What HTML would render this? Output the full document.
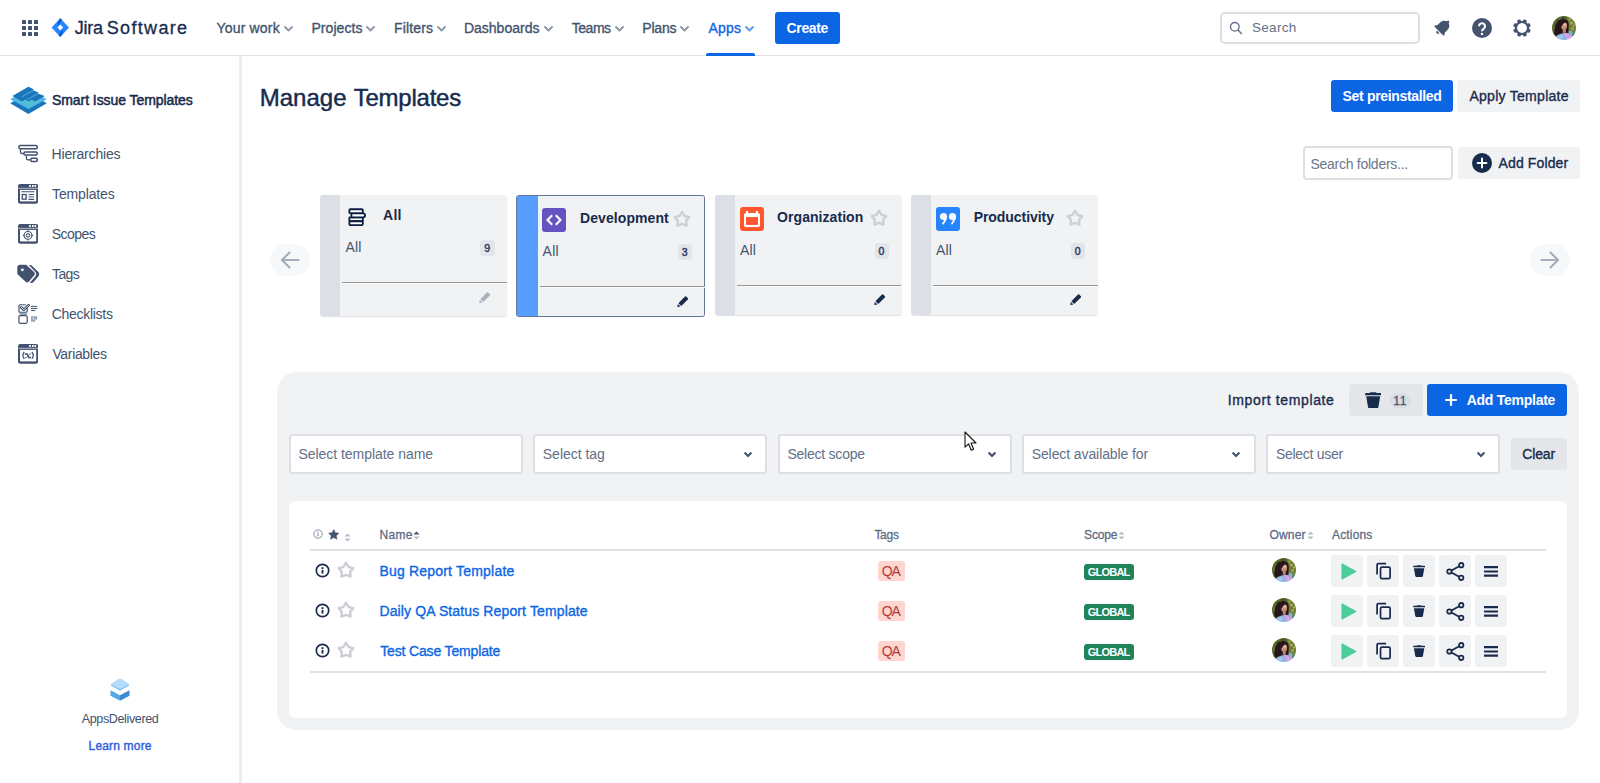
<!DOCTYPE html>
<html><head><meta charset="utf-8"><title>Manage Templates - Jira</title><style>html,body{margin:0;padding:0;background:#fff;}
body{width:1600px;height:783px;overflow:hidden;position:relative;font-family:"Liberation Sans",sans-serif;}
.b{position:absolute;display:block;}
.t{position:absolute;white-space:pre;display:block;}
</style></head><body>
<!-- header -->
<div class="b" style="left:0px;top:55px;width:1600px;height:1px;background:#E1E3E8;"></div>
<svg class="b" style="left:22px;top:20px;" width="16" height="16" viewBox="0 0 16 16"><rect x="0" y="0" width="4" height="4" rx="0.6" fill="#44546F"/><rect x="6" y="0" width="4" height="4" rx="0.6" fill="#44546F"/><rect x="12" y="0" width="4" height="4" rx="0.6" fill="#44546F"/><rect x="0" y="6" width="4" height="4" rx="0.6" fill="#44546F"/><rect x="6" y="6" width="4" height="4" rx="0.6" fill="#44546F"/><rect x="12" y="6" width="4" height="4" rx="0.6" fill="#44546F"/><rect x="0" y="12" width="4" height="4" rx="0.6" fill="#44546F"/><rect x="6" y="12" width="4" height="4" rx="0.6" fill="#44546F"/><rect x="12" y="12" width="4" height="4" rx="0.6" fill="#44546F"/></svg>
<svg class="b" style="left:51.0px;top:18.1px;" width="18.6" height="19.2" viewBox="0 0 18 19"><path d="M9 0.3 L17.6 9.5 L9 18.7 L0.4 9.5 Z" fill="#2684FF"/><path d="M9 0.3 L10.6 2 L7.2 7 L6.2 6.3 C6.6 4.6 7.2 2.4 9 0.3 Z" fill="#0A56D6"/><path d="M9 18.7 L7.4 17 L10.8 12 L11.8 12.7 C11.4 14.4 10.8 16.6 9 18.7 Z" fill="#0A56D6"/><path d="M9 6.5 L11.8 9.5 L9 12.5 L6.2 9.5 Z" fill="#fff"/></svg>
<span class="t" style="left:74.70px;top:18.76px;font-size:18px;line-height:18px;color:#172B4D;letter-spacing:-0.233px;-webkit-text-stroke:0.3px #172B4D;">Jira</span>
<span class="t" style="left:106.80px;top:18.76px;font-size:18px;line-height:18px;color:#172B4D;letter-spacing:1.314px;-webkit-text-stroke:0.3px #172B4D;">Software</span>
<span class="t" style="left:216.60px;top:21.15px;font-size:14px;line-height:14px;color:#44546F;letter-spacing:0.162px;-webkit-text-stroke:0.35px #44546F;">Your work</span>
<svg class="b" style="left:283.5px;top:26px;" width="9" height="6" viewBox="0 0 9 6"><path d="M1 1 L4.5 4.5 L8 1" fill="none" stroke="#8C96A8" stroke-width="1.8" stroke-linecap="round" stroke-linejoin="round"/></svg>
<span class="t" style="left:311.40px;top:21.15px;font-size:14px;line-height:14px;color:#44546F;letter-spacing:0.071px;-webkit-text-stroke:0.35px #44546F;">Projects</span>
<svg class="b" style="left:365.5px;top:26px;" width="9" height="6" viewBox="0 0 9 6"><path d="M1 1 L4.5 4.5 L8 1" fill="none" stroke="#8C96A8" stroke-width="1.8" stroke-linecap="round" stroke-linejoin="round"/></svg>
<span class="t" style="left:393.90px;top:21.15px;font-size:14px;line-height:14px;color:#44546F;letter-spacing:0.183px;-webkit-text-stroke:0.35px #44546F;">Filters</span>
<svg class="b" style="left:436.5px;top:26px;" width="9" height="6" viewBox="0 0 9 6"><path d="M1 1 L4.5 4.5 L8 1" fill="none" stroke="#8C96A8" stroke-width="1.8" stroke-linecap="round" stroke-linejoin="round"/></svg>
<span class="t" style="left:463.90px;top:21.15px;font-size:14px;line-height:14px;color:#44546F;letter-spacing:0.011px;-webkit-text-stroke:0.35px #44546F;">Dashboards</span>
<svg class="b" style="left:543.5px;top:26px;" width="9" height="6" viewBox="0 0 9 6"><path d="M1 1 L4.5 4.5 L8 1" fill="none" stroke="#8C96A8" stroke-width="1.8" stroke-linecap="round" stroke-linejoin="round"/></svg>
<span class="t" style="left:571.70px;top:21.15px;font-size:14px;line-height:14px;color:#44546F;letter-spacing:-0.450px;-webkit-text-stroke:0.35px #44546F;">Teams</span>
<svg class="b" style="left:614.5px;top:26px;" width="9" height="6" viewBox="0 0 9 6"><path d="M1 1 L4.5 4.5 L8 1" fill="none" stroke="#8C96A8" stroke-width="1.8" stroke-linecap="round" stroke-linejoin="round"/></svg>
<span class="t" style="left:642.30px;top:21.15px;font-size:14px;line-height:14px;color:#44546F;letter-spacing:-0.200px;-webkit-text-stroke:0.35px #44546F;">Plans</span>
<svg class="b" style="left:679.5px;top:26px;" width="9" height="6" viewBox="0 0 9 6"><path d="M1 1 L4.5 4.5 L8 1" fill="none" stroke="#8C96A8" stroke-width="1.8" stroke-linecap="round" stroke-linejoin="round"/></svg>
<span class="t" style="left:708.50px;top:21.15px;font-size:14px;line-height:14px;color:#0C66E4;letter-spacing:0.200px;-webkit-text-stroke:0.35px #0C66E4;">Apps</span>
<svg class="b" style="left:744.5px;top:26px;" width="9" height="6" viewBox="0 0 9 6"><path d="M1 1 L4.5 4.5 L8 1" fill="none" stroke="#5B9BF0" stroke-width="1.8" stroke-linecap="round" stroke-linejoin="round"/></svg>
<div class="b" style="left:706px;top:53px;width:49px;height:3px;background:#0C66E4;border-radius:2px 2px 0 0;"></div>
<div class="b" style="left:775px;top:12px;width:65px;height:32px;background:#0C66E4;border-radius:3px;"></div>
<span class="t" style="left:786.50px;top:21.15px;font-size:14px;line-height:14px;color:#fff;letter-spacing:-0.340px;font-weight:700;">Create</span>
<div class="b" style="left:1220px;top:12px;width:200px;height:32px;background:#fff;border-radius:5px;box-sizing:border-box;border:2px solid #DCDFE4;"></div>
<svg class="b" style="left:1229px;top:21px;" width="14" height="14" viewBox="0 0 14 14"><circle cx="5.8" cy="5.8" r="4.3" fill="none" stroke="#626F86" stroke-width="1.35"/><path d="M9 9 L12.4 12.4" stroke="#626F86" stroke-width="1.45" stroke-linecap="round"/></svg>
<span class="t" style="left:1251.90px;top:21.47px;font-size:13.5px;line-height:13.5px;color:#626F86;letter-spacing:0.340px;">Search</span>
<svg class="b" style="left:1433.4px;top:16.6px;" width="20" height="20" viewBox="0 0 20 20"><g transform="rotate(45 10 10) translate(10 0) scale(0.94 1) translate(-10 0)" fill="#44546F"><path d="M10 1.6 a1.4 1.4 0 0 1 1.4 1.4 v0.3 c2.6 0.7 4.1 2.9 4.1 5.6 v3.6 l1.6 2.2 c0.3 0.5 0 1.1 -0.6 1.1 H3.5 c-0.6 0 -0.9 -0.6 -0.6 -1.1 l1.6 -2.2 V8.9 c0 -2.7 1.5 -4.9 4.1 -5.6 V3 A1.4 1.4 0 0 1 10 1.6 Z"/><path d="M8 16.8 h4 a2 2 0 0 1 -4 0 Z"/></g></svg>
<svg class="b" style="left:1472px;top:18px;" width="20" height="20" viewBox="0 0 20 20"><circle cx="10" cy="10" r="10" fill="#44546F"/><path d="M7 8.3 a3 3 0 1 1 4.5 2.6 c-1 0.6 -1.5 1.1 -1.5 2.4" fill="none" stroke="#fff" stroke-width="2.1" stroke-linecap="butt"/><rect x="8.9" y="14.9" width="2.2" height="2.1" fill="#fff"/></svg>
<svg class="b" style="left:1512px;top:18px;transform:rotate(22.5deg);" width="20" height="20" viewBox="-10 -10 20 20"><rect x="-1.9" y="-8.9" width="3.8" height="3.4" rx="1.2" transform="rotate(0)" fill="#44546F"/><rect x="-1.9" y="-8.9" width="3.8" height="3.4" rx="1.2" transform="rotate(45)" fill="#44546F"/><rect x="-1.9" y="-8.9" width="3.8" height="3.4" rx="1.2" transform="rotate(90)" fill="#44546F"/><rect x="-1.9" y="-8.9" width="3.8" height="3.4" rx="1.2" transform="rotate(135)" fill="#44546F"/><rect x="-1.9" y="-8.9" width="3.8" height="3.4" rx="1.2" transform="rotate(180)" fill="#44546F"/><rect x="-1.9" y="-8.9" width="3.8" height="3.4" rx="1.2" transform="rotate(225)" fill="#44546F"/><rect x="-1.9" y="-8.9" width="3.8" height="3.4" rx="1.2" transform="rotate(270)" fill="#44546F"/><rect x="-1.9" y="-8.9" width="3.8" height="3.4" rx="1.2" transform="rotate(315)" fill="#44546F"/><circle cx="0" cy="0" r="6" fill="none" stroke="#44546F" stroke-width="2.2"/></svg>
<svg class="b" style="left:1552px;top:16px;" width="24" height="24" viewBox="0 0 24 24"><defs><clipPath id="av0"><circle cx="12" cy="12" r="12"/></clipPath><filter id="av0f" x="-10%" y="-10%" width="120%" height="120%"><feGaussianBlur stdDeviation="0.55"/></filter></defs><g clip-path="url(#av0)"><g filter="url(#av0f)"><rect x="-2" y="-2" width="28" height="28" fill="#54682A"/><path d="M15 1 L26 1 L26 19 L17 17 Z" fill="#6D7F37"/><circle cx="19.5" cy="7" r="1.6" fill="#A8A858"/><circle cx="20.5" cy="12.5" r="1.5" fill="#9EA24E"/><circle cx="17.6" cy="3.6" r="1.3" fill="#93A048"/><circle cx="22" cy="9.5" r="1.1" fill="#B5B060"/><circle cx="3" cy="12" r="1.4" fill="#8A9A44"/><circle cx="5.5" cy="4.5" r="1.2" fill="#3E4F1E"/><circle cx="11" cy="1.8" r="1.4" fill="#3A4A1C"/><path d="M2.6 19 C1.2 10 5 3.3 11 3 C16 2.8 17.3 7 16.6 11 C16.4 13.5 16.8 15 16 16.5 L9 20.5 Z" fill="#26141A"/><ellipse cx="12.1" cy="10" rx="2.9" ry="3.9" fill="#CF9A84"/><ellipse cx="12.6" cy="8.2" rx="1.8" ry="1.5" fill="#E0B49A"/><path d="M9 9.5 C9 6 11.5 4.6 14.6 6.2 C12.6 6.4 10.6 7.4 9.8 11 Z" fill="#26141A"/><ellipse cx="12.5" cy="12" rx="1.3" ry="0.7" fill="#B56A6A"/><path d="M11 13.5 L13.6 13.5 L14 16.5 L10.6 16.8 Z" fill="#B98572"/><path d="M2 26 C3 19.5 7 17.6 11 17.2 C14 17 17 17 20 18 L22 26 Z" fill="#8CB3E2"/><path d="M16.8 14.5 L20.5 15.5 L20.5 19.5 L17 18.5 Z" fill="#86AEDC"/><path d="M12 16.8 C15 17 18 18 19.5 21.5 L16 24.5 L12.5 19 Z" fill="#D7A2E2"/><path d="M6 20 L10 19 L11 22 L7 23 Z" fill="#A9C4EA"/></g></g></svg>
<!-- sidebar -->
<div class="b" style="left:239px;top:56px;width:2.6px;height:727px;background:#EBECF0;"></div>
<svg class="b" style="left:10px;top:86px;" width="37" height="28.2" viewBox="0 0 37 28.2"><path d="M18.4 6.6 L36.8 17.2 L18.4 28 L0.25 17.2 Z" fill="#1B75BB"/><path d="M18.4 3 L36.8 13.3 L18.4 22.9 L0.25 13.3 Z" fill="#4FB6E8"/><path d="M18.4 9 L31 14.5 L18.4 21.6 L6 14.5 Z" fill="#55D6A6" opacity="0.28"/><path d="M18.4 0.7 L23.7 3.3 L22.9 4.3 L28.6 6.4 L27.7 7.4 L34.8 10.05 L25 15.6 L21.5 13.8 L18.5 15.4 L15.2 13.6 L12 15.4 L2.3 10.05 Z" fill="#1B75BB"/><path d="M22.9 4.5 L11.5 11.2 M27.7 7.6 L17 13.6" stroke="#3D98D6" stroke-width="1.5"/></svg>
<span class="t" style="left:52.00px;top:93.15px;font-size:14px;line-height:14px;color:#172B4D;letter-spacing:-0.070px;-webkit-text-stroke:0.5px #172B4D;">Smart Issue Templates</span>
<svg class="b" style="left:18px;top:143.8px;" width="21" height="19" viewBox="0 0 21 19"><g fill="#fff" stroke="#42526E" stroke-width="1.5"><rect x="0.95" y="1.4" width="18.3" height="3.3" rx="1.3"/><rect x="5.85" y="7.95" width="13.4" height="3.1" rx="1.3"/><rect x="12.75" y="14.25" width="6.5" height="3.3" rx="1.2"/></g><path d="M2.5 5.3 V7.9 Q2.5 9.5 4.1 9.5 H5.3 M8.4 11.7 V14.2 Q8.4 15.8 10 15.8 H12.2" fill="none" stroke="#42526E" stroke-width="1.3"/></svg>
<span class="t" style="left:51.60px;top:147.15px;font-size:14px;line-height:14px;color:#42526E;letter-spacing:-0.190px;">Hierarchies</span>
<svg class="b" style="left:18.0px;top:184.1px;" width="20.2" height="19.7" viewBox="0 0 20.2 19.7"><rect x="0" y="0" width="20.2" height="19.7" rx="2.2" fill="#42526E"/><rect x="0.2" y="3.8" width="19.8" height="1.1" fill="#A7B0C1"/><rect x="2" y="5.9" width="16.2" height="11.5" fill="#fff"/><rect x="11" y="1" width="1.8" height="1.9" fill="#fff"/><rect x="14" y="1" width="1.7" height="1.9" fill="#fff"/><rect x="16.5" y="1" width="1.6" height="1.9" fill="#fff"/><rect x="3.2" y="7.2" width="13.5" height="1.1" rx="0.5" fill="#42526E"/><rect x="4.25" y="10.55" width="3.9" height="4.6" fill="#fff" stroke="#42526E" stroke-width="1.3"/><rect x="10.4" y="9.9" width="5.8" height="1.1" rx="0.5" fill="#42526E"/><rect x="10.4" y="12.3" width="5.8" height="1.2" rx="0.5" fill="#6B7A94"/><rect x="10.4" y="14.8" width="5.8" height="1.1" rx="0.5" fill="#42526E"/></svg>
<span class="t" style="left:52.10px;top:187.15px;font-size:14px;line-height:14px;color:#42526E;letter-spacing:-0.150px;">Templates</span>
<svg class="b" style="left:18.0px;top:224.1px;" width="20.2" height="19.7" viewBox="0 0 20.2 19.7"><rect x="0" y="0" width="20.2" height="19.7" rx="2.2" fill="#42526E"/><rect x="0.2" y="3.8" width="19.8" height="1.1" fill="#A7B0C1"/><rect x="2" y="5.9" width="16.2" height="11.5" fill="#fff"/><rect x="11" y="1" width="1.8" height="1.9" fill="#fff"/><rect x="14" y="1" width="1.7" height="1.9" fill="#fff"/><rect x="16.5" y="1" width="1.6" height="1.9" fill="#fff"/><circle cx="10" cy="11.4" r="3.9" fill="none" stroke="#42526E" stroke-width="1.1"/><circle cx="10" cy="11.4" r="1.8" fill="#D5DAE3" stroke="#42526E" stroke-width="1"/><path d="M10 6.3 v1.3 M10 15.2 v1.3 M4.9 11.4 h1.3 M13.8 11.4 h1.3" stroke="#42526E" stroke-width="1.1"/></svg>
<span class="t" style="left:51.80px;top:227.15px;font-size:14px;line-height:14px;color:#42526E;letter-spacing:-0.540px;">Scopes</span>
<svg class="b" style="left:16.5px;top:264px;" width="24" height="20" viewBox="0 0 24 20"><path d="M11.8 1.1 L13.2 1.1 Q14.4 1.3 15.2 2 L21.6 8.2 Q23.2 10.2 21.6 12.2 L16.4 18.2 Q15 19.5 12.9 18.7 L18.6 11.9 Q20.1 10 18.6 8.3 Z" fill="#42526E"/><path d="M0.3 3.6 Q0.3 0.8 3.3 0.8 H8.6 Q9.4 0.8 10 1.4 L17.3 8.2 Q18.7 9.7 17.3 11.3 L12 17.6 Q10.2 19.3 8.4 17.6 L1.1 10.8 Q0.3 10 0.3 9 Z" fill="#42526E"/><circle cx="5.35" cy="5.85" r="1.45" fill="#fff"/></svg>
<span class="t" style="left:52.10px;top:266.85px;font-size:14px;line-height:14px;color:#42526E;letter-spacing:-0.667px;">Tags</span>
<svg class="b" style="left:18px;top:304px;" width="21" height="21" viewBox="0 0 21 21"><rect x="0.8" y="0.75" width="8.4" height="7.6" rx="1.4" fill="#fff" stroke="#42526E" stroke-width="1.2"/><rect x="0.2" y="1.6" width="1.5" height="6" fill="#8A96AD"/><rect x="1.6" y="8.5" width="7.4" height="2.5" fill="#9AA5B8"/><rect x="0.8" y="11.55" width="8.4" height="7.8" rx="1.5" fill="#fff" stroke="#42526E" stroke-width="1.2"/><rect x="0.2" y="12.6" width="1.5" height="5.8" fill="#8A96AD"/><path d="M7 0.2 H10 V3 Z" fill="#fff"/><path d="M3.3 3.4 L5.8 5.7 L10.6 1.3" fill="none" stroke="#42526E" stroke-width="2.7" stroke-linecap="round" stroke-linejoin="round"/><path d="M3.3 3.4 L5.8 5.7 L10.6 1.3" fill="none" stroke="#fff" stroke-width="0.8" stroke-linecap="round" stroke-linejoin="round"/><path d="M13 2.4 h6.2 M13 4.45 h6.4 M13 6.5 h4.3" stroke="#42526E" stroke-width="1"/><path d="M13 12.2 H19.2 V15.4 H17.2 V17.7 H13 Z" fill="#9AA5B8"/><rect x="14.9" y="13.6" width="1.1" height="2" fill="#E6E9EF"/></svg>
<span class="t" style="left:51.70px;top:307.15px;font-size:14px;line-height:14px;color:#42526E;letter-spacing:-0.289px;">Checklists</span>
<svg class="b" style="left:18.0px;top:344.1px;" width="20.2" height="19.7" viewBox="0 0 20.2 19.7"><rect x="0" y="0" width="20.2" height="19.7" rx="2.2" fill="#42526E"/><rect x="0.2" y="3.8" width="19.8" height="1.1" fill="#A7B0C1"/><rect x="2" y="5.9" width="16.2" height="11.5" fill="#fff"/><rect x="11" y="1" width="1.8" height="1.9" fill="#fff"/><rect x="14" y="1" width="1.7" height="1.9" fill="#fff"/><rect x="16.5" y="1" width="1.6" height="1.9" fill="#fff"/><path d="M6.3 8 Q3.5 11.4 6.3 14.8 M13.9 8 Q16.7 11.4 13.9 14.8" fill="none" stroke="#42526E" stroke-width="1.25"/><path d="M7.5 10.2 C8.6 9.3 9.4 9.8 10 11.7 C10.6 13.7 11.3 14.3 12.5 13.3" fill="none" stroke="#42526E" stroke-width="1.5" stroke-linecap="round"/><path d="M12.8 9.8 C11.8 9.6 11 10.6 10 11.8 C9 13 8.2 14.2 7.2 13.8" fill="none" stroke="#42526E" stroke-width="0.9" stroke-linecap="round"/></svg>
<span class="t" style="left:52.40px;top:347.15px;font-size:14px;line-height:14px;color:#42526E;letter-spacing:-0.337px;">Variables</span>
<svg class="b" style="left:110px;top:678px;" width="20" height="23.5" viewBox="0 0 20 23.5"><path d="M10 1 L19.6 7 L10 12.4 L0.4 7 Z" fill="#5FAEE8"/><path d="M10 0.2 L19.6 6.2 L10 11.6 L0.4 6.2 Z" fill="#B2DCF9"/><path d="M0.5 12.2 L10 17.3 L10 22.8 L0.5 17.7 Z" fill="#55A8E6"/><path d="M19.5 12.2 L10 17.3 L10 22.8 L19.5 17.7 Z" fill="#3C89D8"/></svg>
<span class="t" style="left:81.70px;top:713.02px;font-size:12.5px;line-height:12.5px;color:#42526E;letter-spacing:-0.350px;">AppsDelivered</span>
<span class="t" style="left:88.60px;top:739.84px;font-size:12px;line-height:12px;color:#2F5FE0;letter-spacing:0.167px;-webkit-text-stroke:0.4px #2F5FE0;">Learn more</span>
<!-- main -->
<span class="t" style="left:259.70px;top:85.68px;font-size:24px;line-height:24px;color:#172B4D;letter-spacing:0.020px;-webkit-text-stroke:0.45px #172B4D;">Manage</span>
<span class="t" style="left:353.70px;top:85.68px;font-size:24px;line-height:24px;color:#172B4D;letter-spacing:-0.238px;-webkit-text-stroke:0.45px #172B4D;">Templates</span>
<div class="b" style="left:1331px;top:80px;width:122px;height:32px;background:#0C66E4;border-radius:3px;"></div>
<span class="t" style="left:1342.60px;top:89.15px;font-size:14px;line-height:14px;color:#fff;letter-spacing:-0.333px;font-weight:700;">Set preinstalled</span>
<div class="b" style="left:1457px;top:80px;width:123px;height:32px;background:#F1F2F4;border-radius:3px;"></div>
<span class="t" style="left:1469.40px;top:89.15px;font-size:14px;line-height:14px;color:#172B4D;letter-spacing:0.285px;-webkit-text-stroke:0.35px #172B4D;">Apply Template</span>
<div class="b" style="left:1303px;top:146px;width:150px;height:34px;background:#fff;border-radius:4px;box-sizing:border-box;border:2px solid #DCDFE4;"></div>
<span class="t" style="left:1310.40px;top:157.15px;font-size:14px;line-height:14px;color:#6B778C;letter-spacing:-0.256px;">Search folders...</span>
<div class="b" style="left:1458px;top:147px;width:122px;height:32px;background:#F1F2F4;border-radius:3px;"></div>
<svg class="b" style="left:1472px;top:153px;" width="20" height="20" viewBox="0 0 20 20"><circle cx="10" cy="10" r="10" fill="#172B4D"/><path d="M10 5.6 V14.4 M5.6 10 H14.4" stroke="#fff" stroke-width="2" stroke-linecap="round"/></svg>
<span class="t" style="left:1498.50px;top:156.15px;font-size:14px;line-height:14px;color:#172B4D;letter-spacing:0.133px;-webkit-text-stroke:0.35px #172B4D;">Add Folder</span>
<div class="b" style="left:270px;top:244px;width:40px;height:32px;background:#F7F8F9;border-radius:16px;"></div>
<svg class="b" style="left:280px;top:250px;" width="20" height="20" viewBox="0 0 20 20"><path d="M18.5 10 H2.5 M9.5 2.5 L2 10 L9.5 17.5" fill="none" stroke="#A5ADBA" stroke-width="2.1" stroke-linecap="round" stroke-linejoin="round"/></svg>
<div class="b" style="left:1530px;top:244px;width:40px;height:32px;background:#F7F8F9;border-radius:16px;"></div>
<svg class="b" style="left:1540px;top:250px;" width="20" height="20" viewBox="0 0 20 20"><path d="M1.5 10 H17.5 M10.5 2.5 L18 10 L10.5 17.5" fill="none" stroke="#A5ADBA" stroke-width="2.1" stroke-linecap="round" stroke-linejoin="round"/></svg>
<div class="b" style="left:320px;top:195px;width:187px;height:121px;background:#F1F2F4;border-radius:3px;overflow:hidden;box-shadow:0 1px 1px rgba(9,30,66,0.13);"><div class="b" style="left:0;top:0;width:20px;height:121px;background:#DCDFE4"></div></div>
<svg class="b" style="left:347.7px;top:207.7px;" width="18.1" height="18.1" viewBox="0 0 19 19"><g fill="#fff" stroke="#091E42" stroke-width="1.9"><rect x="1.4" y="1.3" width="14.2" height="4.3" rx="1.2"/><rect x="1.4" y="9.8" width="14.2" height="4.1" rx="0.6"/><rect x="1.4" y="13.9" width="14.2" height="4.1" rx="1.4"/><path d="M3.6 5.6 H15.8 A2.1 2.1 0 0 1 15.8 9.8 H3.6 Z"/></g></svg>
<span class="t" style="left:383.10px;top:208.35px;font-size:14px;line-height:14px;color:#172B4D;letter-spacing:0.200px;font-weight:700;">All</span>
<span class="t" style="left:345.50px;top:240.15px;font-size:14px;line-height:14px;color:#44546F;letter-spacing:0.200px;">All</span>
<div class="b" style="left:480px;top:240px;width:15px;height:15.7px;background:#E2E5EA;border-radius:3.5px;"></div><span class="t" style="left:484.20px;top:243.41px;font-size:10.5px;line-height:10.5px;color:#2C3E5D;letter-spacing:0.000px;-webkit-text-stroke:0.45px #2C3E5D;">9</span>
<div class="b" style="left:342px;top:282px;width:165px;height:1px;background:#969696;"></div><div class="b" style="left:342px;top:283px;width:165px;height:1px;background:#F8F9FA;"></div>
<svg class="b" style="left:479.0px;top:291.6px;" width="11.6" height="11.2" viewBox="0 0 12.5 12"><path d="M8.6 0.6 a1 1 0 0 1 1.4 0 l1.7 1.7 a1 1 0 0 1 0 1.4 L4.6 10.8 L1.5 7.7 Z" fill="#A9AFBC"/><path d="M0.9 8.6 L3.7 11.4 L0.3 11.9 Z" fill="#A9AFBC"/></svg>
<div class="b" style="left:516px;top:195px;width:189px;height:122px;background:#F1F2F4;border-radius:2.5px;box-sizing:border-box;border:1px solid #63779A;overflow:hidden;"><div class="b" style="left:0;top:0;width:21px;height:122px;background:#579DFF"></div></div>
<div class="b" style="left:542px;top:208px;width:24px;height:24px;background:#6554C0;border-radius:3px;"></div>
<svg class="b" style="left:546px;top:212px;" width="16" height="16" viewBox="0 0 16 16"><path d="M6.2 3.2 L1.5 8 L6.2 12.8 M9.8 3.2 L14.5 8 L9.8 12.8" fill="none" stroke="#F4F5F7" stroke-width="2.2" stroke-linecap="butt" stroke-linejoin="miter"/></svg>
<span class="t" style="left:580.00px;top:211.35px;font-size:14px;line-height:14px;color:#172B4D;letter-spacing:0.080px;font-weight:700;">Development</span>
<svg class="b" style="left:673.3000000000001px;top:209.70000000000002px;" width="18" height="18" viewBox="0 0 18 18"><path d="M9.00 1.90 L11.59 5.94 L16.23 7.15 L13.18 10.86 L13.47 15.65 L9.00 13.90 L4.53 15.65 L4.82 10.86 L1.77 7.15 L6.41 5.94 Z" fill="none" stroke="#CDD0D6" stroke-width="2.5" stroke-linejoin="round"/></svg>
<span class="t" style="left:542.60px;top:244.15px;font-size:14px;line-height:14px;color:#44546F;letter-spacing:0.200px;">All</span>
<div class="b" style="left:678px;top:244px;width:14px;height:15.7px;background:#E2E5EA;border-radius:3.5px;"></div><span class="t" style="left:681.70px;top:247.41px;font-size:10.5px;line-height:10.5px;color:#2C3E5D;letter-spacing:0.000px;-webkit-text-stroke:0.45px #2C3E5D;">3</span>
<div class="b" style="left:540px;top:286px;width:165px;height:1px;background:#969696;"></div><div class="b" style="left:540px;top:287px;width:165px;height:1px;background:#F8F9FA;"></div>
<svg class="b" style="left:676.5px;top:295.6px;" width="11.6" height="11.2" viewBox="0 0 12.5 12"><path d="M8.6 0.6 a1 1 0 0 1 1.4 0 l1.7 1.7 a1 1 0 0 1 0 1.4 L4.6 10.8 L1.5 7.7 Z" fill="#172B4D"/><path d="M0.9 8.6 L3.7 11.4 L0.3 11.9 Z" fill="#172B4D"/></svg>
<div class="b" style="left:715px;top:195px;width:186.5px;height:120px;background:#F1F2F4;border-radius:3px;overflow:hidden;box-shadow:0 1px 1px rgba(9,30,66,0.13);"><div class="b" style="left:0;top:0;width:20px;height:120px;background:#DCDFE4"></div></div>
<div class="b" style="left:740px;top:207px;width:24px;height:24px;background:#FF5630;border-radius:3px;"></div>
<svg class="b" style="left:744px;top:211px;" width="16" height="16" viewBox="0 0 16 16"><rect x="0" y="2" width="16" height="14" rx="2" fill="#fff"/><rect x="2" y="6" width="12" height="7.9" fill="#FF5630"/><rect x="2" y="0" width="2.1" height="3" fill="#fff"/><rect x="11.9" y="0" width="2.1" height="3" fill="#fff"/></svg>
<span class="t" style="left:777.10px;top:210.15px;font-size:14px;line-height:14px;color:#172B4D;letter-spacing:0.055px;font-weight:700;">Organization</span>
<svg class="b" style="left:870.3000000000001px;top:208.5px;" width="18" height="18" viewBox="0 0 18 18"><path d="M9.00 1.90 L11.59 5.94 L16.23 7.15 L13.18 10.86 L13.47 15.65 L9.00 13.90 L4.53 15.65 L4.82 10.86 L1.77 7.15 L6.41 5.94 Z" fill="none" stroke="#CDD0D6" stroke-width="2.5" stroke-linejoin="round"/></svg>
<span class="t" style="left:740.00px;top:243.15px;font-size:14px;line-height:14px;color:#44546F;letter-spacing:0.200px;">All</span>
<div class="b" style="left:874.8px;top:243px;width:14.2px;height:15.7px;background:#E2E5EA;border-radius:3.5px;"></div><span class="t" style="left:878.60px;top:246.41px;font-size:10.5px;line-height:10.5px;color:#2C3E5D;letter-spacing:0.000px;-webkit-text-stroke:0.45px #2C3E5D;">0</span>
<div class="b" style="left:737px;top:285px;width:164px;height:1px;background:#969696;"></div><div class="b" style="left:737px;top:286px;width:164px;height:1px;background:#F8F9FA;"></div>
<svg class="b" style="left:873.5px;top:294.3px;" width="11.6" height="11.2" viewBox="0 0 12.5 12"><path d="M8.6 0.6 a1 1 0 0 1 1.4 0 l1.7 1.7 a1 1 0 0 1 0 1.4 L4.6 10.8 L1.5 7.7 Z" fill="#172B4D"/><path d="M0.9 8.6 L3.7 11.4 L0.3 11.9 Z" fill="#172B4D"/></svg>
<div class="b" style="left:911px;top:195px;width:186.5px;height:120px;background:#F1F2F4;border-radius:3px;overflow:hidden;box-shadow:0 1px 1px rgba(9,30,66,0.13);"><div class="b" style="left:0;top:0;width:20px;height:120px;background:#DCDFE4"></div></div>
<div class="b" style="left:936px;top:207px;width:24px;height:24px;background:#2684FF;border-radius:3px;"></div>
<svg class="b" style="left:940px;top:211px;" width="16" height="16" viewBox="0 0 16 16"><g fill="#F7F8F9"><circle cx="3.5" cy="5.5" r="3.6"/><path d="M7.1 5.5 C7.1 8.4 5.4 11.2 3.2 13.7 L1.9 12.7 C3.2 11 3.9 9.8 4.2 8.6 Z"/><circle cx="12.45" cy="5.5" r="3.6"/><path d="M16.05 5.5 C16.05 8.4 14.35 11.2 12.15 13.7 L10.85 12.7 C12.15 11 12.85 9.8 13.15 8.6 Z"/></g></svg>
<span class="t" style="left:973.70px;top:210.15px;font-size:14px;line-height:14px;color:#172B4D;letter-spacing:-0.055px;font-weight:700;">Productivity</span>
<svg class="b" style="left:1066.3px;top:208.5px;" width="18" height="18" viewBox="0 0 18 18"><path d="M9.00 1.90 L11.59 5.94 L16.23 7.15 L13.18 10.86 L13.47 15.65 L9.00 13.90 L4.53 15.65 L4.82 10.86 L1.77 7.15 L6.41 5.94 Z" fill="none" stroke="#CDD0D6" stroke-width="2.5" stroke-linejoin="round"/></svg>
<span class="t" style="left:936.00px;top:243.15px;font-size:14px;line-height:14px;color:#44546F;letter-spacing:0.200px;">All</span>
<div class="b" style="left:1071px;top:243px;width:14.2px;height:15.7px;background:#E2E5EA;border-radius:3.5px;"></div><span class="t" style="left:1074.80px;top:246.41px;font-size:10.5px;line-height:10.5px;color:#2C3E5D;letter-spacing:0.000px;-webkit-text-stroke:0.45px #2C3E5D;">0</span>
<div class="b" style="left:933px;top:285px;width:165px;height:1px;background:#969696;"></div><div class="b" style="left:933px;top:286px;width:165px;height:1px;background:#F8F9FA;"></div>
<svg class="b" style="left:1069.5px;top:294.3px;" width="11.6" height="11.2" viewBox="0 0 12.5 12"><path d="M8.6 0.6 a1 1 0 0 1 1.4 0 l1.7 1.7 a1 1 0 0 1 0 1.4 L4.6 10.8 L1.5 7.7 Z" fill="#172B4D"/><path d="M0.9 8.6 L3.7 11.4 L0.3 11.9 Z" fill="#172B4D"/></svg>
<div class="b" style="left:277px;top:372px;width:1302px;height:358px;background:#F1F2F4;border-radius:20px;"></div>
<span class="t" style="left:1227.80px;top:393.15px;font-size:14px;line-height:14px;color:#172B4D;letter-spacing:0.629px;-webkit-text-stroke:0.35px #172B4D;">Import template</span>
<div class="b" style="left:1349px;top:384px;width:74px;height:32px;background:#E4E6EA;border-radius:3px;"></div>
<svg class="b" style="left:1364.8px;top:391.8px;" width="16.4" height="16.2" viewBox="0 0 16.4 16.2"><path d="M5.4 0.2 h5.6 l0.6 0.9 H15.4 a0.9 0.9 0 0 1 0.9 0.9 v1.2 H0.1 V2 a0.9 0.9 0 0 1 0.9 -0.9 H4.8 Z" fill="#172B4D"/><path d="M1.2 4.3 H15.2 L13.4 15 a1.3 1.3 0 0 1 -1.3 1.1 H4.3 a1.3 1.3 0 0 1 -1.3 -1.1 Z" fill="#172B4D"/></svg>
<div class="b" style="left:1389.5px;top:392.5px;width:21px;height:15px;background:#DADDE3;border-radius:8px;"></div>
<span class="t" style="left:1393.30px;top:394.74px;font-size:12px;line-height:12px;color:#44546F;letter-spacing:0.550px;-webkit-text-stroke:0.3px #44546F;">11</span>
<div class="b" style="left:1427px;top:384px;width:140px;height:32px;background:#0C66E4;border-radius:3px;"></div>
<svg class="b" style="left:1445px;top:394px;" width="12" height="12" viewBox="0 0 12 12"><path d="M6 0.2 V11.8 M0.2 6 H11.8" stroke="#fff" stroke-width="2.2" stroke-linecap="butt"/></svg>
<span class="t" style="left:1466.70px;top:393.15px;font-size:14px;line-height:14px;color:#fff;letter-spacing:-0.255px;font-weight:700;">Add Template</span>
<div class="b" style="left:289px;top:434px;width:233.79999999999995px;height:40px;background:#fff;border-radius:3.5px;box-sizing:border-box;border:2px solid #DCDFE4;"></div>
<span class="t" style="left:298.40px;top:447.15px;font-size:14px;line-height:14px;color:#626F86;letter-spacing:-0.037px;">Select template name</span>
<div class="b" style="left:533.4px;top:434px;width:234.10000000000002px;height:40px;background:#fff;border-radius:3.5px;box-sizing:border-box;border:2px solid #DCDFE4;"></div>
<span class="t" style="left:542.80px;top:447.15px;font-size:14px;line-height:14px;color:#626F86;letter-spacing:-0.022px;">Select tag</span>
<svg class="b" style="left:742.9px;top:451.2px;" width="10" height="7" viewBox="0 0 10 7"><path d="M1.6 1.6 L5 5 L8.4 1.6" fill="none" stroke="#42526E" stroke-width="2.1" stroke-linejoin="miter"/></svg>
<div class="b" style="left:778.4px;top:434px;width:233.20000000000005px;height:40px;background:#fff;border-radius:3.5px;box-sizing:border-box;border:2px solid #DCDFE4;"></div>
<span class="t" style="left:787.40px;top:447.15px;font-size:14px;line-height:14px;color:#626F86;letter-spacing:-0.227px;">Select scope</span>
<svg class="b" style="left:987.0px;top:451.2px;" width="10" height="7" viewBox="0 0 10 7"><path d="M1.6 1.6 L5 5 L8.4 1.6" fill="none" stroke="#42526E" stroke-width="2.1" stroke-linejoin="miter"/></svg>
<div class="b" style="left:1022.2px;top:434px;width:233.79999999999995px;height:40px;background:#fff;border-radius:3.5px;box-sizing:border-box;border:2px solid #DCDFE4;"></div>
<span class="t" style="left:1031.70px;top:447.15px;font-size:14px;line-height:14px;color:#626F86;letter-spacing:-0.095px;">Select available for</span>
<svg class="b" style="left:1231.4px;top:451.2px;" width="10" height="7" viewBox="0 0 10 7"><path d="M1.6 1.6 L5 5 L8.4 1.6" fill="none" stroke="#42526E" stroke-width="2.1" stroke-linejoin="miter"/></svg>
<div class="b" style="left:1266.3px;top:434px;width:234.0px;height:40px;background:#fff;border-radius:3.5px;box-sizing:border-box;border:2px solid #DCDFE4;"></div>
<span class="t" style="left:1275.90px;top:447.15px;font-size:14px;line-height:14px;color:#626F86;letter-spacing:-0.280px;">Select user</span>
<svg class="b" style="left:1475.7px;top:451.2px;" width="10" height="7" viewBox="0 0 10 7"><path d="M1.6 1.6 L5 5 L8.4 1.6" fill="none" stroke="#42526E" stroke-width="2.1" stroke-linejoin="miter"/></svg>
<div class="b" style="left:1511px;top:438px;width:56px;height:32px;background:#E4E6EA;border-radius:3px;"></div>
<span class="t" style="left:1522.30px;top:447.15px;font-size:14px;line-height:14px;color:#172B4D;letter-spacing:-0.150px;-webkit-text-stroke:0.35px #172B4D;">Clear</span>
<div class="b" style="left:289px;top:501px;width:1278px;height:217px;background:#fff;border-radius:6px;"></div>
<svg class="b" style="left:313px;top:529px;" width="10" height="10" viewBox="0 0 10 10"><circle cx="5" cy="5" r="4.2" fill="none" stroke="#8993A4" stroke-width="1"/><rect x="4.4" y="4.4" width="1.2" height="3" fill="#8993A4"/><rect x="4.4" y="2.5" width="1.2" height="1.2" fill="#8993A4"/></svg>
<svg class="b" style="left:328.3px;top:528.5px;" width="11.5" height="11" viewBox="0 0 17 17"><path d="M8.50 0.70 L11.0 5.7 L16.49 6.50 L12.4 10.4 L13.44 15.90 L8.50 13.2 L3.56 15.90 L4.6 10.4 L0.51 6.50 L6.0 5.7 Z" fill="#44546F" stroke="#44546F" stroke-width="0.8" stroke-linejoin="round"/></svg>
<svg class="b" style="left:343.8px;top:532.8000000000001px;" width="7" height="9" viewBox="0 0 7 9"><path d="M0.4 3.6 L3.5 0.4 L6.6 3.6 Z" fill="#B7BDC8"/><path d="M0.4 5.4 L3.5 8.6 L6.6 5.4 Z" fill="#B7BDC8"/></svg>
<span class="t" style="left:379.60px;top:528.84px;font-size:12px;line-height:12px;color:#5E6C84;letter-spacing:0.233px;-webkit-text-stroke:0.3px #5E6C84;">Name</span>
<svg class="b" style="left:413.40000000000003px;top:530.6px;" width="7" height="9" viewBox="0 0 7 9"><path d="M0.4 3.6 L3.5 0.4 L6.6 3.6 Z" fill="#44546F"/><path d="M0.4 5.4 L3.5 8.6 L6.6 5.4 Z" fill="#B7BDC8"/></svg>
<span class="t" style="left:874.40px;top:528.84px;font-size:12px;line-height:12px;color:#5E6C84;letter-spacing:-0.267px;-webkit-text-stroke:0.3px #5E6C84;">Tags</span>
<span class="t" style="left:1084.10px;top:528.84px;font-size:12px;line-height:12px;color:#5E6C84;letter-spacing:-0.175px;-webkit-text-stroke:0.3px #5E6C84;">Scope</span>
<svg class="b" style="left:1118.3999999999999px;top:530.6px;" width="7" height="9" viewBox="0 0 7 9"><path d="M0.4 3.6 L3.5 0.4 L6.6 3.6 Z" fill="#B7BDC8"/><path d="M0.4 5.4 L3.5 8.6 L6.6 5.4 Z" fill="#B7BDC8"/></svg>
<span class="t" style="left:1269.50px;top:528.84px;font-size:12px;line-height:12px;color:#5E6C84;letter-spacing:0.175px;-webkit-text-stroke:0.3px #5E6C84;">Owner</span>
<svg class="b" style="left:1307.1px;top:530.6px;" width="7" height="9" viewBox="0 0 7 9"><path d="M0.4 3.6 L3.5 0.4 L6.6 3.6 Z" fill="#B7BDC8"/><path d="M0.4 5.4 L3.5 8.6 L6.6 5.4 Z" fill="#B7BDC8"/></svg>
<span class="t" style="left:1332.00px;top:528.84px;font-size:12px;line-height:12px;color:#5E6C84;letter-spacing:0.167px;-webkit-text-stroke:0.3px #5E6C84;">Actions</span>
<div class="b" style="left:310px;top:549px;width:1236px;height:2px;background:#DFE1E6;"></div>
<div class="b" style="left:310px;top:671px;width:1236px;height:2px;background:#DFE1E6;"></div>
<svg class="b" style="left:314.6px;top:562.6px;" width="15" height="15" viewBox="0 0 15 15"><circle cx="7.5" cy="7.5" r="6.2" fill="#fff" stroke="#172B4D" stroke-width="1.7"/><rect x="6.55" y="6.9" width="1.9" height="3.6" fill="#172B4D"/><rect x="6.55" y="4.2" width="1.9" height="1.8" fill="#172B4D"/></svg>
<svg class="b" style="left:337px;top:561.1px;" width="18" height="18" viewBox="0 0 18 18"><path d="M9.00 1.90 L11.59 5.94 L16.23 7.15 L13.18 10.86 L13.47 15.65 L9.00 13.90 L4.53 15.65 L4.82 10.86 L1.77 7.15 L6.41 5.94 Z" fill="none" stroke="#CDD0D6" stroke-width="2.5" stroke-linejoin="round"/></svg>
<span class="t" style="left:379.40px;top:564.35px;font-size:14px;line-height:14px;color:#0C66E4;letter-spacing:0.200px;-webkit-text-stroke:0.35px #0C66E4;">Bug Report Template</span>
<div class="b" style="left:878px;top:561px;width:27px;height:20px;background:#FFD5D2;border-radius:3px;"></div>
<span class="t" style="left:881.70px;top:563.85px;font-size:14px;line-height:14px;color:#B23A30;letter-spacing:-1.000px;">QA</span>
<div class="b" style="left:1084px;top:564px;width:50px;height:16px;background:#1F845A;border-radius:3px;"></div>
<span class="t" style="left:1087.80px;top:566.89px;font-size:11px;line-height:11px;color:#fff;letter-spacing:-0.780px;font-weight:700;">GLOBAL</span>
<svg class="b" style="left:1272px;top:558px;" width="24" height="24" viewBox="0 0 24 24"><defs><clipPath id="av1"><circle cx="12" cy="12" r="12"/></clipPath><filter id="av1f" x="-10%" y="-10%" width="120%" height="120%"><feGaussianBlur stdDeviation="0.55"/></filter></defs><g clip-path="url(#av1)"><g filter="url(#av1f)"><rect x="-2" y="-2" width="28" height="28" fill="#54682A"/><path d="M15 1 L26 1 L26 19 L17 17 Z" fill="#6D7F37"/><circle cx="19.5" cy="7" r="1.6" fill="#A8A858"/><circle cx="20.5" cy="12.5" r="1.5" fill="#9EA24E"/><circle cx="17.6" cy="3.6" r="1.3" fill="#93A048"/><circle cx="22" cy="9.5" r="1.1" fill="#B5B060"/><circle cx="3" cy="12" r="1.4" fill="#8A9A44"/><circle cx="5.5" cy="4.5" r="1.2" fill="#3E4F1E"/><circle cx="11" cy="1.8" r="1.4" fill="#3A4A1C"/><path d="M2.6 19 C1.2 10 5 3.3 11 3 C16 2.8 17.3 7 16.6 11 C16.4 13.5 16.8 15 16 16.5 L9 20.5 Z" fill="#26141A"/><ellipse cx="12.1" cy="10" rx="2.9" ry="3.9" fill="#CF9A84"/><ellipse cx="12.6" cy="8.2" rx="1.8" ry="1.5" fill="#E0B49A"/><path d="M9 9.5 C9 6 11.5 4.6 14.6 6.2 C12.6 6.4 10.6 7.4 9.8 11 Z" fill="#26141A"/><ellipse cx="12.5" cy="12" rx="1.3" ry="0.7" fill="#B56A6A"/><path d="M11 13.5 L13.6 13.5 L14 16.5 L10.6 16.8 Z" fill="#B98572"/><path d="M2 26 C3 19.5 7 17.6 11 17.2 C14 17 17 17 20 18 L22 26 Z" fill="#8CB3E2"/><path d="M16.8 14.5 L20.5 15.5 L20.5 19.5 L17 18.5 Z" fill="#86AEDC"/><path d="M12 16.8 C15 17 18 18 19.5 21.5 L16 24.5 L12.5 19 Z" fill="#D7A2E2"/><path d="M6 20 L10 19 L11 22 L7 23 Z" fill="#A9C4EA"/></g></g></svg>
<div class="b" style="left:1331px;top:555px;width:32px;height:32px;background:#F1F2F4;border-radius:3px;"></div>
<div class="b" style="left:1367px;top:555px;width:32px;height:32px;background:#F1F2F4;border-radius:3px;"></div>
<div class="b" style="left:1403px;top:555px;width:32px;height:32px;background:#F1F2F4;border-radius:3px;"></div>
<div class="b" style="left:1439px;top:555px;width:32px;height:32px;background:#F1F2F4;border-radius:3px;"></div>
<div class="b" style="left:1475px;top:555px;width:32px;height:32px;background:#F1F2F4;border-radius:3px;"></div>
<svg class="b" style="left:1340.5px;top:562.5px;" width="16" height="17" viewBox="0 0 16 17"><path d="M1 0.8 L15 8.5 L1 16.2 Z" fill="#4BCE97" stroke="#4BCE97" stroke-width="1" stroke-linejoin="round"/></svg>
<svg class="b" style="left:1375.8px;top:561.7px;" width="15.4" height="18.2" viewBox="0 0 17 19"><path d="M1.2 13.4 V2.6 A1.4 1.4 0 0 1 2.6 1.2 H11.2" fill="none" stroke="#172B4D" stroke-width="1.9"/><rect x="5" y="5" width="10.6" height="12.8" rx="1.6" fill="none" stroke="#172B4D" stroke-width="1.9"/></svg>
<svg class="b" style="left:1413px;top:565.2px;" width="12.2" height="12" viewBox="0 0 16.4 16.2"><path d="M5.4 0.2 h5.6 l0.6 0.9 H15.4 a0.9 0.9 0 0 1 0.9 0.9 v1.2 H0.1 V2 a0.9 0.9 0 0 1 0.9 -0.9 H4.8 Z" fill="#172B4D"/><path d="M1.2 4.3 H15.2 L13.4 15 a1.3 1.3 0 0 1 -1.3 1.1 H4.3 a1.3 1.3 0 0 1 -1.3 -1.1 Z" fill="#172B4D"/></svg>
<svg class="b" style="left:1445.5px;top:561.5px;" width="19" height="19" viewBox="0 0 19 19"><path d="M15 3.3 L3.6 9.5 L15 15.7" fill="none" stroke="#172B4D" stroke-width="1.8"/><g fill="#F1F2F4" stroke="#172B4D" stroke-width="1.8"><circle cx="15.2" cy="3.2" r="2.2"/><circle cx="3.4" cy="9.5" r="2.2"/><circle cx="15.2" cy="15.8" r="2.2"/></g></svg>
<svg class="b" style="left:1484px;top:566px;" width="14" height="11" viewBox="0 0 14 11"><path d="M0 1.1 H14 M0 5.5 H14 M0 9.6 H14" stroke="#172B4D" stroke-width="2.2"/></svg>
<svg class="b" style="left:314.6px;top:602.6px;" width="15" height="15" viewBox="0 0 15 15"><circle cx="7.5" cy="7.5" r="6.2" fill="#fff" stroke="#172B4D" stroke-width="1.7"/><rect x="6.55" y="6.9" width="1.9" height="3.6" fill="#172B4D"/><rect x="6.55" y="4.2" width="1.9" height="1.8" fill="#172B4D"/></svg>
<svg class="b" style="left:337px;top:601.1px;" width="18" height="18" viewBox="0 0 18 18"><path d="M9.00 1.90 L11.59 5.94 L16.23 7.15 L13.18 10.86 L13.47 15.65 L9.00 13.90 L4.53 15.65 L4.82 10.86 L1.77 7.15 L6.41 5.94 Z" fill="none" stroke="#CDD0D6" stroke-width="2.5" stroke-linejoin="round"/></svg>
<span class="t" style="left:379.40px;top:604.35px;font-size:14px;line-height:14px;color:#0C66E4;letter-spacing:0.127px;-webkit-text-stroke:0.35px #0C66E4;">Daily QA Status Report Template</span>
<div class="b" style="left:878px;top:601px;width:27px;height:20px;background:#FFD5D2;border-radius:3px;"></div>
<span class="t" style="left:881.70px;top:603.85px;font-size:14px;line-height:14px;color:#B23A30;letter-spacing:-1.000px;">QA</span>
<div class="b" style="left:1084px;top:604px;width:50px;height:16px;background:#1F845A;border-radius:3px;"></div>
<span class="t" style="left:1087.80px;top:606.89px;font-size:11px;line-height:11px;color:#fff;letter-spacing:-0.780px;font-weight:700;">GLOBAL</span>
<svg class="b" style="left:1272px;top:598px;" width="24" height="24" viewBox="0 0 24 24"><defs><clipPath id="av2"><circle cx="12" cy="12" r="12"/></clipPath><filter id="av2f" x="-10%" y="-10%" width="120%" height="120%"><feGaussianBlur stdDeviation="0.55"/></filter></defs><g clip-path="url(#av2)"><g filter="url(#av2f)"><rect x="-2" y="-2" width="28" height="28" fill="#54682A"/><path d="M15 1 L26 1 L26 19 L17 17 Z" fill="#6D7F37"/><circle cx="19.5" cy="7" r="1.6" fill="#A8A858"/><circle cx="20.5" cy="12.5" r="1.5" fill="#9EA24E"/><circle cx="17.6" cy="3.6" r="1.3" fill="#93A048"/><circle cx="22" cy="9.5" r="1.1" fill="#B5B060"/><circle cx="3" cy="12" r="1.4" fill="#8A9A44"/><circle cx="5.5" cy="4.5" r="1.2" fill="#3E4F1E"/><circle cx="11" cy="1.8" r="1.4" fill="#3A4A1C"/><path d="M2.6 19 C1.2 10 5 3.3 11 3 C16 2.8 17.3 7 16.6 11 C16.4 13.5 16.8 15 16 16.5 L9 20.5 Z" fill="#26141A"/><ellipse cx="12.1" cy="10" rx="2.9" ry="3.9" fill="#CF9A84"/><ellipse cx="12.6" cy="8.2" rx="1.8" ry="1.5" fill="#E0B49A"/><path d="M9 9.5 C9 6 11.5 4.6 14.6 6.2 C12.6 6.4 10.6 7.4 9.8 11 Z" fill="#26141A"/><ellipse cx="12.5" cy="12" rx="1.3" ry="0.7" fill="#B56A6A"/><path d="M11 13.5 L13.6 13.5 L14 16.5 L10.6 16.8 Z" fill="#B98572"/><path d="M2 26 C3 19.5 7 17.6 11 17.2 C14 17 17 17 20 18 L22 26 Z" fill="#8CB3E2"/><path d="M16.8 14.5 L20.5 15.5 L20.5 19.5 L17 18.5 Z" fill="#86AEDC"/><path d="M12 16.8 C15 17 18 18 19.5 21.5 L16 24.5 L12.5 19 Z" fill="#D7A2E2"/><path d="M6 20 L10 19 L11 22 L7 23 Z" fill="#A9C4EA"/></g></g></svg>
<div class="b" style="left:1331px;top:595px;width:32px;height:32px;background:#F1F2F4;border-radius:3px;"></div>
<div class="b" style="left:1367px;top:595px;width:32px;height:32px;background:#F1F2F4;border-radius:3px;"></div>
<div class="b" style="left:1403px;top:595px;width:32px;height:32px;background:#F1F2F4;border-radius:3px;"></div>
<div class="b" style="left:1439px;top:595px;width:32px;height:32px;background:#F1F2F4;border-radius:3px;"></div>
<div class="b" style="left:1475px;top:595px;width:32px;height:32px;background:#F1F2F4;border-radius:3px;"></div>
<svg class="b" style="left:1340.5px;top:602.5px;" width="16" height="17" viewBox="0 0 16 17"><path d="M1 0.8 L15 8.5 L1 16.2 Z" fill="#4BCE97" stroke="#4BCE97" stroke-width="1" stroke-linejoin="round"/></svg>
<svg class="b" style="left:1375.8px;top:601.7px;" width="15.4" height="18.2" viewBox="0 0 17 19"><path d="M1.2 13.4 V2.6 A1.4 1.4 0 0 1 2.6 1.2 H11.2" fill="none" stroke="#172B4D" stroke-width="1.9"/><rect x="5" y="5" width="10.6" height="12.8" rx="1.6" fill="none" stroke="#172B4D" stroke-width="1.9"/></svg>
<svg class="b" style="left:1413px;top:605.2px;" width="12.2" height="12" viewBox="0 0 16.4 16.2"><path d="M5.4 0.2 h5.6 l0.6 0.9 H15.4 a0.9 0.9 0 0 1 0.9 0.9 v1.2 H0.1 V2 a0.9 0.9 0 0 1 0.9 -0.9 H4.8 Z" fill="#172B4D"/><path d="M1.2 4.3 H15.2 L13.4 15 a1.3 1.3 0 0 1 -1.3 1.1 H4.3 a1.3 1.3 0 0 1 -1.3 -1.1 Z" fill="#172B4D"/></svg>
<svg class="b" style="left:1445.5px;top:601.5px;" width="19" height="19" viewBox="0 0 19 19"><path d="M15 3.3 L3.6 9.5 L15 15.7" fill="none" stroke="#172B4D" stroke-width="1.8"/><g fill="#F1F2F4" stroke="#172B4D" stroke-width="1.8"><circle cx="15.2" cy="3.2" r="2.2"/><circle cx="3.4" cy="9.5" r="2.2"/><circle cx="15.2" cy="15.8" r="2.2"/></g></svg>
<svg class="b" style="left:1484px;top:606px;" width="14" height="11" viewBox="0 0 14 11"><path d="M0 1.1 H14 M0 5.5 H14 M0 9.6 H14" stroke="#172B4D" stroke-width="2.2"/></svg>
<svg class="b" style="left:314.6px;top:642.6px;" width="15" height="15" viewBox="0 0 15 15"><circle cx="7.5" cy="7.5" r="6.2" fill="#fff" stroke="#172B4D" stroke-width="1.7"/><rect x="6.55" y="6.9" width="1.9" height="3.6" fill="#172B4D"/><rect x="6.55" y="4.2" width="1.9" height="1.8" fill="#172B4D"/></svg>
<svg class="b" style="left:337px;top:641.1px;" width="18" height="18" viewBox="0 0 18 18"><path d="M9.00 1.90 L11.59 5.94 L16.23 7.15 L13.18 10.86 L13.47 15.65 L9.00 13.90 L4.53 15.65 L4.82 10.86 L1.77 7.15 L6.41 5.94 Z" fill="none" stroke="#CDD0D6" stroke-width="2.5" stroke-linejoin="round"/></svg>
<span class="t" style="left:380.20px;top:644.35px;font-size:14px;line-height:14px;color:#0C66E4;letter-spacing:-0.147px;-webkit-text-stroke:0.35px #0C66E4;">Test Case Template</span>
<div class="b" style="left:878px;top:641px;width:27px;height:20px;background:#FFD5D2;border-radius:3px;"></div>
<span class="t" style="left:881.70px;top:643.85px;font-size:14px;line-height:14px;color:#B23A30;letter-spacing:-1.000px;">QA</span>
<div class="b" style="left:1084px;top:644px;width:50px;height:16px;background:#1F845A;border-radius:3px;"></div>
<span class="t" style="left:1087.80px;top:646.89px;font-size:11px;line-height:11px;color:#fff;letter-spacing:-0.780px;font-weight:700;">GLOBAL</span>
<svg class="b" style="left:1272px;top:638px;" width="24" height="24" viewBox="0 0 24 24"><defs><clipPath id="av3"><circle cx="12" cy="12" r="12"/></clipPath><filter id="av3f" x="-10%" y="-10%" width="120%" height="120%"><feGaussianBlur stdDeviation="0.55"/></filter></defs><g clip-path="url(#av3)"><g filter="url(#av3f)"><rect x="-2" y="-2" width="28" height="28" fill="#54682A"/><path d="M15 1 L26 1 L26 19 L17 17 Z" fill="#6D7F37"/><circle cx="19.5" cy="7" r="1.6" fill="#A8A858"/><circle cx="20.5" cy="12.5" r="1.5" fill="#9EA24E"/><circle cx="17.6" cy="3.6" r="1.3" fill="#93A048"/><circle cx="22" cy="9.5" r="1.1" fill="#B5B060"/><circle cx="3" cy="12" r="1.4" fill="#8A9A44"/><circle cx="5.5" cy="4.5" r="1.2" fill="#3E4F1E"/><circle cx="11" cy="1.8" r="1.4" fill="#3A4A1C"/><path d="M2.6 19 C1.2 10 5 3.3 11 3 C16 2.8 17.3 7 16.6 11 C16.4 13.5 16.8 15 16 16.5 L9 20.5 Z" fill="#26141A"/><ellipse cx="12.1" cy="10" rx="2.9" ry="3.9" fill="#CF9A84"/><ellipse cx="12.6" cy="8.2" rx="1.8" ry="1.5" fill="#E0B49A"/><path d="M9 9.5 C9 6 11.5 4.6 14.6 6.2 C12.6 6.4 10.6 7.4 9.8 11 Z" fill="#26141A"/><ellipse cx="12.5" cy="12" rx="1.3" ry="0.7" fill="#B56A6A"/><path d="M11 13.5 L13.6 13.5 L14 16.5 L10.6 16.8 Z" fill="#B98572"/><path d="M2 26 C3 19.5 7 17.6 11 17.2 C14 17 17 17 20 18 L22 26 Z" fill="#8CB3E2"/><path d="M16.8 14.5 L20.5 15.5 L20.5 19.5 L17 18.5 Z" fill="#86AEDC"/><path d="M12 16.8 C15 17 18 18 19.5 21.5 L16 24.5 L12.5 19 Z" fill="#D7A2E2"/><path d="M6 20 L10 19 L11 22 L7 23 Z" fill="#A9C4EA"/></g></g></svg>
<div class="b" style="left:1331px;top:635px;width:32px;height:32px;background:#F1F2F4;border-radius:3px;"></div>
<div class="b" style="left:1367px;top:635px;width:32px;height:32px;background:#F1F2F4;border-radius:3px;"></div>
<div class="b" style="left:1403px;top:635px;width:32px;height:32px;background:#F1F2F4;border-radius:3px;"></div>
<div class="b" style="left:1439px;top:635px;width:32px;height:32px;background:#F1F2F4;border-radius:3px;"></div>
<div class="b" style="left:1475px;top:635px;width:32px;height:32px;background:#F1F2F4;border-radius:3px;"></div>
<svg class="b" style="left:1340.5px;top:642.5px;" width="16" height="17" viewBox="0 0 16 17"><path d="M1 0.8 L15 8.5 L1 16.2 Z" fill="#4BCE97" stroke="#4BCE97" stroke-width="1" stroke-linejoin="round"/></svg>
<svg class="b" style="left:1375.8px;top:641.7px;" width="15.4" height="18.2" viewBox="0 0 17 19"><path d="M1.2 13.4 V2.6 A1.4 1.4 0 0 1 2.6 1.2 H11.2" fill="none" stroke="#172B4D" stroke-width="1.9"/><rect x="5" y="5" width="10.6" height="12.8" rx="1.6" fill="none" stroke="#172B4D" stroke-width="1.9"/></svg>
<svg class="b" style="left:1413px;top:645.2px;" width="12.2" height="12" viewBox="0 0 16.4 16.2"><path d="M5.4 0.2 h5.6 l0.6 0.9 H15.4 a0.9 0.9 0 0 1 0.9 0.9 v1.2 H0.1 V2 a0.9 0.9 0 0 1 0.9 -0.9 H4.8 Z" fill="#172B4D"/><path d="M1.2 4.3 H15.2 L13.4 15 a1.3 1.3 0 0 1 -1.3 1.1 H4.3 a1.3 1.3 0 0 1 -1.3 -1.1 Z" fill="#172B4D"/></svg>
<svg class="b" style="left:1445.5px;top:641.5px;" width="19" height="19" viewBox="0 0 19 19"><path d="M15 3.3 L3.6 9.5 L15 15.7" fill="none" stroke="#172B4D" stroke-width="1.8"/><g fill="#F1F2F4" stroke="#172B4D" stroke-width="1.8"><circle cx="15.2" cy="3.2" r="2.2"/><circle cx="3.4" cy="9.5" r="2.2"/><circle cx="15.2" cy="15.8" r="2.2"/></g></svg>
<svg class="b" style="left:1484px;top:646px;" width="14" height="11" viewBox="0 0 14 11"><path d="M0 1.1 H14 M0 5.5 H14 M0 9.6 H14" stroke="#172B4D" stroke-width="2.2"/></svg>
<svg class="b" style="left:964px;top:431px;" width="13" height="21" viewBox="0 0 13 21"><path d="M1 1 L1 16.2 L4.6 12.8 L7.2 19.2 L9.6 18.2 L7 12 L12 12 Z" fill="#fff" stroke="#111" stroke-width="1.1" stroke-linejoin="round"/></svg>
</body></html>
